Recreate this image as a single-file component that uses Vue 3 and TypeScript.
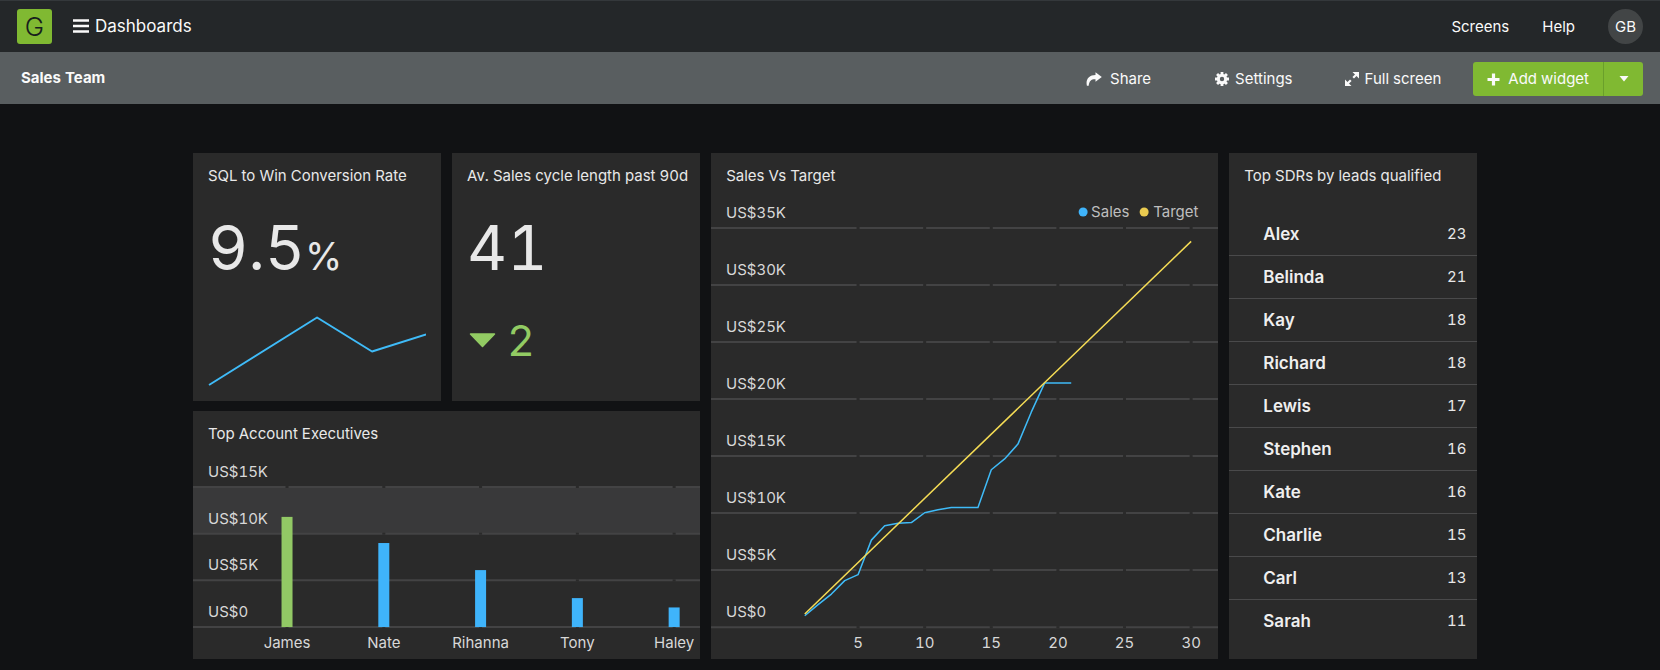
<script setup lang="ts">
interface Point {
  x: number
  y: number
}

interface Executive {
  name: string
  revenue: number
  leader?: boolean
}

interface Rep {
  name: string
  leads: number
}

const reps: Rep[] = [
  { name: 'Alex', leads: 23 },
  { name: 'Belinda', leads: 21 },
  { name: 'Kay', leads: 18 },
  { name: 'Richard', leads: 18 },
  { name: 'Lewis', leads: 17 },
  { name: 'Stephen', leads: 16 },
  { name: 'Kate', leads: 16 },
  { name: 'Charlie', leads: 15 },
  { name: 'Carl', leads: 13 },
  { name: 'Sarah', leads: 11 },
]

const label = (k: number): string => (k === 0 ? 'US$0' : `US$${k}K`)
const toPoints = (pts: Point[]): string => pts.map((p) => `${p.x},${p.y}`).join(' ')

// Executives bar chart, revenue in thousands
const executives: Executive[] = [
  { name: 'James', revenue: 11.8, leader: true },
  { name: 'Nate', revenue: 9 },
  { name: 'Rihanna', revenue: 6.1 },
  { name: 'Tony', revenue: 3.1 },
  { name: 'Haley', revenue: 2.1 },
]
const barBase = 172
const barY = (k: number): number => barBase - (k * 140) / 15
const barX = (i: number): number => 94 + (i * 387) / 4
const barTicks = [15, 10, 5, 0]

// Cumulative sales line chart, values in thousands, one per day
const sales = [
  1, 1.97, 2.9, 4.08, 4.6, 7.63, 8.9, 9.1, 9.17, 10.03, 10.3, 10.5, 10.5, 10.5, 13.8, 14.75,
  16.05, 18.85, 21.4, 21.4, 21.4,
]
const lineBase = 430
const lineY = (k: number): number => lineBase - k * 11.4
const dayX = (day: number): number => 147 + (day - 5) * 13.32
const lineTicks = [35, 30, 25, 20, 15, 10, 5, 0]
const days = [5, 10, 15, 20, 25, 30]
const salesPoints = toPoints(sales.map((v, i) => ({ x: dayX(i + 1), y: lineY(v) })))
const targetPoints = toPoints([
  { x: dayX(1), y: lineY(1.15) },
  { x: dayX(30), y: lineY(33.83) },
])
</script>

<template>
  <div class="app">
    <header class="topbar">
      <a class="logo" href="#" aria-label="Home">G</a>
      <button class="menu" type="button">
        <svg width="16" height="14" viewBox="0 0 16 14" aria-hidden="true">
          <path d="M0 1.500h16M0 7h16M0 12.500h16" stroke="currentColor" stroke-width="2.600" />
        </svg>
        Dashboards
      </button>
      <nav class="account">
        <a href="#">Screens</a>
        <a href="#">Help</a>
        <button class="avatar" type="button">GB</button>
      </nav>
    </header>

    <div class="toolbar">
      <h1>Sales Team</h1>
      <div class="actions">
        <button class="action share" type="button">
          <svg width="16" height="14" viewBox="0 0 16 14" aria-hidden="true">
            <path
              d="M9.500 0.300 15.800 5 9.500 9.800V7.200C5.500 7 3.300 8.400 2.700 13.700H0.900C-0.600 7.200 3 2.900 9.500 2.900Z"
              fill="currentColor"
            />
          </svg>
          Share
        </button>
        <button class="action settings" type="button">
          <svg width="14" height="14" viewBox="0 0 14 14" aria-hidden="true">
            <g fill="none" stroke="currentColor">
              <circle cx="7" cy="7" r="3.700" stroke-width="3" />
              <path
                d="M7 0v2.500M7 11.500V14M0 7h2.500M11.500 7H14M2.050 2.050l1.800 1.800M10.150 10.150l1.800 1.800M2.050 11.950l1.800-1.800M10.150 3.850l1.800-1.800"
                stroke-width="2.800"
              />
            </g>
          </svg>
          Settings
        </button>
        <button class="action full" type="button">
          <svg width="14" height="14" viewBox="0 0 14 14" aria-hidden="true">
            <path d="M7.500 0H14V6.500ZM0 7.500V14H6.500Z" fill="currentColor" />
            <path d="M11.500 2.500 8.200 5.800M5.800 8.200 2.500 11.500" stroke="currentColor" stroke-width="2.200" />
          </svg>
          Full screen
        </button>
        <div class="split">
          <button class="add" type="button">
            <svg width="13" height="13" viewBox="0 0 13 13" aria-hidden="true">
              <path d="M6.500 0.500v12M0.500 6.500h12" stroke="currentColor" stroke-width="3.200" />
            </svg>
            Add widget
          </button>
          <button class="more" type="button" aria-label="More widget options">
            <svg width="10" height="6" viewBox="0 0 10 6" aria-hidden="true">
              <path d="M0.500 0h9L5 5.500Z" fill="currentColor" />
            </svg>
          </button>
        </div>
      </div>
    </div>

    <main class="board">
      <section class="card">
        <h2>SQL to Win Conversion Rate</h2>
        <p class="figure">9.5<span class="unit">%</span></p>
        <svg class="spark" viewBox="0 0 218 70" role="img" aria-label="Conversion rate trend">
          <polyline points="1,69 109,1.500 164,35.500 218,18.500" class="line sales thick" />
        </svg>
      </section>

      <section class="card">
        <h2>Av. Sales cycle length past 90d</h2>
        <p class="figure">41</p>
        <p class="change">
          <svg width="27" height="15" viewBox="0 0 27 15" aria-label="Down" role="img">
            <path
              d="M1.500 1h24L13.500 13.500Z"
              fill="currentColor"
              stroke="currentColor"
              stroke-width="1.500"
              stroke-linejoin="round"
            />
          </svg>
          2
        </p>
      </section>

      <section class="card wide tall">
        <h2>Sales Vs Target</h2>
        <svg class="chart" viewBox="0 0 507 462" role="img" aria-label="Sales and target by day">
          <g v-for="k in lineTicks" :key="k">
            <line x1="0" x2="507" :y1="lineY(k)" :y2="lineY(k)" class="rule" />
            <line v-for="d in days" :key="d" :x1="dayX(d) - 1.5" :x2="dayX(d) + 1.5" :y1="lineY(k)" :y2="lineY(k)" class="gap" />
            <text x="15" :y="lineY(k) - 10">{{ label(k) }}</text>
          </g>
          <text v-for="d in days" :key="d" :x="dayX(d)" y="451" text-anchor="middle">{{ d }}</text>
          <circle cx="372" cy="15" r="4.500" class="dot-sales" />
          <text x="380" y="20" class="legend">Sales</text>
          <circle cx="433" cy="15" r="4.500" class="dot-target" />
          <text x="442" y="20" class="legend">Target</text>
          <polyline :points="salesPoints" class="line sales" />
          <polyline :points="targetPoints" class="line target" />
        </svg>
      </section>

      <section class="card tall">
        <h2>Top SDRs by leads qualified</h2>
        <table class="leaders">
          <tbody>
            <tr v-for="rep in reps" :key="rep.name">
              <th scope="row">{{ rep.name }}</th>
              <td>{{ rep.leads }}</td>
            </tr>
          </tbody>
        </table>
      </section>

      <section class="card wide">
        <h2>Top Account Executives</h2>
        <svg class="chart" viewBox="0 0 507 204" role="img" aria-label="Revenue by account executive">
          <rect x="0" :y="barY(15)" width="507" :height="barY(10) - barY(15)" class="band" />
          <g v-for="k in barTicks" :key="k">
            <line x1="0" x2="507" :y1="barY(k)" :y2="barY(k)" class="rule" />
            <line v-for="(e, i) in executives" :key="e.name" :x1="barX(i) - 1.5" :x2="barX(i) + 1.5" :y1="barY(k)" :y2="barY(k)" class="gap" />
            <text x="15" :y="barY(k) - 10">{{ label(k) }}</text>
          </g>
          <g v-for="(e, i) in executives" :key="e.name">
            <rect
              :x="barX(i) - 5.5"
              :y="barY(e.revenue)"
              width="11"
              :height="barBase - barY(e.revenue)"
              :class="e.leader ? 'bar leader' : 'bar'"
            />
            <text :x="barX(i)" y="193" text-anchor="middle">{{ e.name }}</text>
          </g>
        </svg>
      </section>
    </main>
  </div>
</template>

<style>
body {
  margin: 0;
  background: #111214;
}
</style>

<style scoped>
.app {
  font-family: Inter, "Liberation Sans", sans-serif;
  font-size: 15px;
  line-height: 20px;
  font-variant-numeric: tabular-nums;
  color: #e8e8e8;
}

button {
  font: inherit;
  color: inherit;
  background: none;
  border: 0;
  padding: 0;
  cursor: pointer;
}

a {
  color: inherit;
  text-decoration: none;
}

svg {
  display: block;
  flex: none;
}

.topbar {
  display: flex;
  align-items: center;
  height: 52px;
  padding: 0 17px;
  box-sizing: border-box;
  background: #242729;
  border-top: 1px solid #34383b;
  color: #fafafa;
}

.logo {
  display: grid;
  place-items: center;
  width: 35px;
  height: 35px;
  border-radius: 3px;
  background: #80b932;
  color: #16201c;
  font: 300 26px/35px Inter, sans-serif;
}

.menu {
  display: flex;
  align-items: center;
  gap: 6px;
  margin-left: 21px;
  padding-bottom: 2px;
  font-size: 17px;
}

.account {
  display: flex;
  align-items: center;
  gap: 33px;
  margin-left: auto;
}

.avatar {
  width: 35px;
  height: 35px;
  border-radius: 50%;
  background: #424546;
}

.toolbar {
  display: flex;
  align-items: center;
  justify-content: space-between;
  height: 52px;
  padding: 0 17px 0 21px;
  box-sizing: border-box;
  background: #595e60;
  color: #fafafa;
}

h1 {
  margin: 0;
  font-size: 15px;
  font-weight: 700;
}

.actions {
  display: flex;
  align-items: center;
  padding-top: 2px;
}

.action {
  display: flex;
  align-items: center;
  gap: 6px;
}

.share {
  gap: 8px;
  margin-right: 64px;
}

.settings {
  margin-right: 52px;
}

.full {
  margin-right: 32px;
}

.split {
  display: flex;
  border-radius: 3px;
  background: #80b932;
}

.add {
  display: flex;
  align-items: center;
  gap: 8px;
  height: 34px;
  padding: 0 14px;
}

.more {
  display: grid;
  place-items: center;
  width: 40px;
  border-left: 1px solid #6a9f2b;
}

.board {
  display: grid;
  grid-template-columns: repeat(5, 1fr);
  grid-auto-rows: minmax(248px, auto);
  gap: 10px 11px;
  padding: 49px 11% 11px 193px;
}

.card {
  min-width: 0;
  background: #2a2a2a;
}

.wide {
  grid-column: span 2;
}

.tall {
  grid-row: span 2;
}

h2 {
  margin: 0;
  padding: 13px 0 11px 15px;
  font-size: 15px;
  font-weight: 400;
  line-height: 20px;
  white-space: nowrap;
}

.figure {
  margin: 0;
  padding: 16px 15px 0;
  font-size: 62px;
  font-weight: 400;
  line-height: 70px;
}

.unit {
  font-size: 38px;
}

.spark {
  width: calc(100% - 30px);
  margin: 25px 15px 0;
}

.change {
  display: flex;
  align-items: center;
  gap: 11px;
  margin: 0;
  padding: 31px 17px 0;
  font-size: 43px;
  font-weight: 400;
  line-height: 52px;
  color: #92cb63;
}

.chart {
  width: 100%;
}

.chart text {
  font-size: 15px;
  fill: #d8d8d8;
}

.chart text.legend {
  fill: #bebebe;
}

.rule {
  stroke: #434344;
  stroke-width: 2;
}

.gap {
  stroke: #2a2a2a;
  stroke-width: 2;
}

.band {
  fill: #39393a;
}

.bar {
  fill: #3fb4fb;
}

.bar.leader {
  fill: #92c965;
}

.line {
  fill: none;
  stroke-width: 1.5;
  stroke-linejoin: round;
}

.line.thick {
  stroke-width: 2;
}

.sales {
  stroke: #3fbbf8;
}

.target {
  stroke: #f5dc55;
}

.dot-sales {
  fill: #3fb4fb;
}

.dot-target {
  fill: #eacb50;
}

.leaders {
  width: 100%;
  margin-top: 16px;
  border-collapse: separate;
  border-spacing: 0;
}

.leaders th,
.leaders td {
  height: 42px;
  padding: 0;
  border-bottom: 1px solid #4a4a4b;
}

.leaders tr:last-child th,
.leaders tr:last-child td {
  border-bottom-color: transparent;
}

.leaders th {
  padding-left: 34px;
  text-align: left;
  font-size: 17px;
  font-weight: 600;
  color: #efefef;
}

.leaders td {
  padding-right: 11px;
  text-align: right;
}
</style>
